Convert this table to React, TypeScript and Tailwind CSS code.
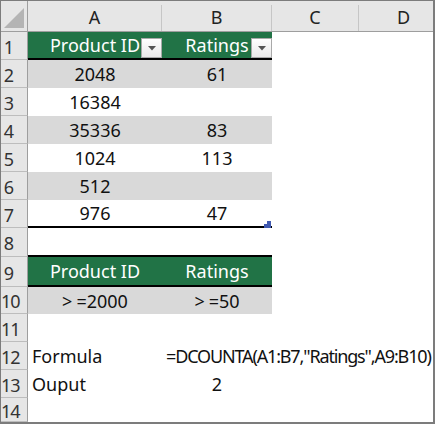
import React from 'react';

type Row = {
  n: number;
  h: string;
  kind?: 'head' | 'band' | 'plain';
  a?: React.ReactNode;
  b?: React.ReactNode;
  alignA?: 'center' | 'left';
  alignB?: 'center' | 'left';
  filter?: boolean;
  underline?: boolean;
  handle?: boolean;
};

const rows: Row[] = [
  { n: 1, h: 'h-[28px]', kind: 'head', a: 'Product ID', b: 'Ratings', filter: true, underline: true },
  { n: 2, h: 'h-[28px]', kind: 'band', a: '2048', b: '61' },
  { n: 3, h: 'h-[28px]', a: '16384' },
  { n: 4, h: 'h-[28px]', kind: 'band', a: '35336', b: '83' },
  { n: 5, h: 'h-[28px]', a: '1024', b: '113' },
  { n: 6, h: 'h-[28px]', kind: 'band', a: '512' },
  { n: 7, h: 'h-[28px]', a: '976', b: '47', underline: true, handle: true },
  { n: 8, h: 'h-[29px]', underline: true },
  { n: 9, h: 'h-[30px]', kind: 'head', a: 'Product ID', b: 'Ratings', underline: true },
  {
    n: 10,
    h: 'h-[27px]',
    kind: 'band',
    a: (
      <>
        <span className="mr-[4px]">&gt;</span>=2000
      </>
    ),
    b: (
      <>
        <span className="mr-[4px]">&gt;</span>=50
      </>
    ),
  },
  { n: 11, h: 'h-[28px]' },
  {
    n: 12,
    h: 'h-[28px]',
    a: 'Formula',
    b: <span className="tracking-[-1.15px]">=DCOUNTA(A1:B7,"Ratings",A9:B10)</span>,
    alignA: 'left',
    alignB: 'left',
  },
  { n: 13, h: 'h-[28px]', a: 'Ouput', b: '2', alignA: 'left' },
  { n: 14, h: 'h-[24px]' },
];

// little dropdown button of the autofilter
function FilterButton() {
  return (
    <div className="absolute right-0 bottom-0 w-[21px] h-[20px] border border-[#a9a9a9] bg-gradient-to-b from-white to-[#e9e9e9] flex items-center justify-center">
      <svg width="8" height="5" viewBox="0 0 8 5">
        <polygon points="0,0 8,0 4,4.5" fill="#555" />
      </svg>
    </div>
  );
}

function Cell({
  row,
  value,
  width,
  align,
  last,
}: {
  row: Row;
  value?: React.ReactNode;
  width: string;
  align?: 'center' | 'left';
  last?: boolean;
}) {
  const bg = row.kind === 'head' ? 'bg-[#217346] text-white' : row.kind === 'band' ? 'bg-[#d9d9d9] text-[#111]' : 'bg-white text-[#111]';
  const line = row.underline ? 'border-b-2 border-black' : '';
  return (
    <div
      className={`relative ${width} h-full shrink-0 flex items-center ${
        align === 'left' ? 'justify-start pl-[4px]' : 'justify-center'
      } ${bg} ${line} whitespace-nowrap`}
    >
      {value !== undefined && <span className={align === 'left' ? 'relative z-10' : ''}>{value}</span>}
      {row.filter && <FilterButton />}
      {last && row.handle && (
        <svg className="absolute right-[1px] bottom-[-2px]" width="7" height="7" viewBox="0 0 7 7">
          <polygon points="3,0 7,0 7,7 0,7 0,3 3,3" fill="#4059b0" />
        </svg>
      )}
    </div>
  );
}

export default function App() {
  return (
    <div className="w-[435px] h-[424px] overflow-hidden bg-white border-t border-l border-r-2 border-b-2 border-[#7c7c7c] font-['Noto_Sans',sans-serif] text-[18px] leading-none">
      {/* column letters */}
      <div className="flex h-[31px] bg-[#e6e6e6] border-b border-[#9e9e9e] text-[#222]">
        <div className="w-[27px] shrink-0 h-full border-r border-[#9e9e9e] flex items-end justify-end pr-[3px] pb-[3px]">
          <svg width="20" height="20" viewBox="0 0 20 20">
            <polygon points="20,0 20,20 0,20" fill="#b4b4b4" />
          </svg>
        </div>
        {[
          ['A', 'w-[134px]'],
          ['B', 'w-[110px]'],
          ['C', 'w-[87px]'],
          ['D', 'w-[90px]'],
        ].map(([l, w]) => (
          <div key={l} className={`${w} shrink-0 h-full flex`}>
            <div className="flex-1 flex items-center justify-center pt-[2px]">{l}</div>
            <div className="w-px h-[26px] self-end bg-[#c6c6c6]" />
          </div>
        ))}
      </div>

      {rows.map((row) => (
        <div key={row.n} className={`flex ${row.h}`}>
          <div className="w-[27px] shrink-0 h-full bg-[#e6e6e6] border-r border-b border-r-[#9e9e9e] border-b-[#bdbdbd] text-[#333] flex items-center">
            <span className="w-[15px] text-center pt-[2px] tracking-[-1px]">{row.n}</span>
          </div>
          <Cell row={row} value={row.a} width="w-[134px]" align={row.alignA} />
          <Cell row={row} value={row.b} width="w-[110px]" align={row.alignB} last />
          <div className="flex-1 bg-white" />
        </div>
      ))}
    </div>
  );
}
